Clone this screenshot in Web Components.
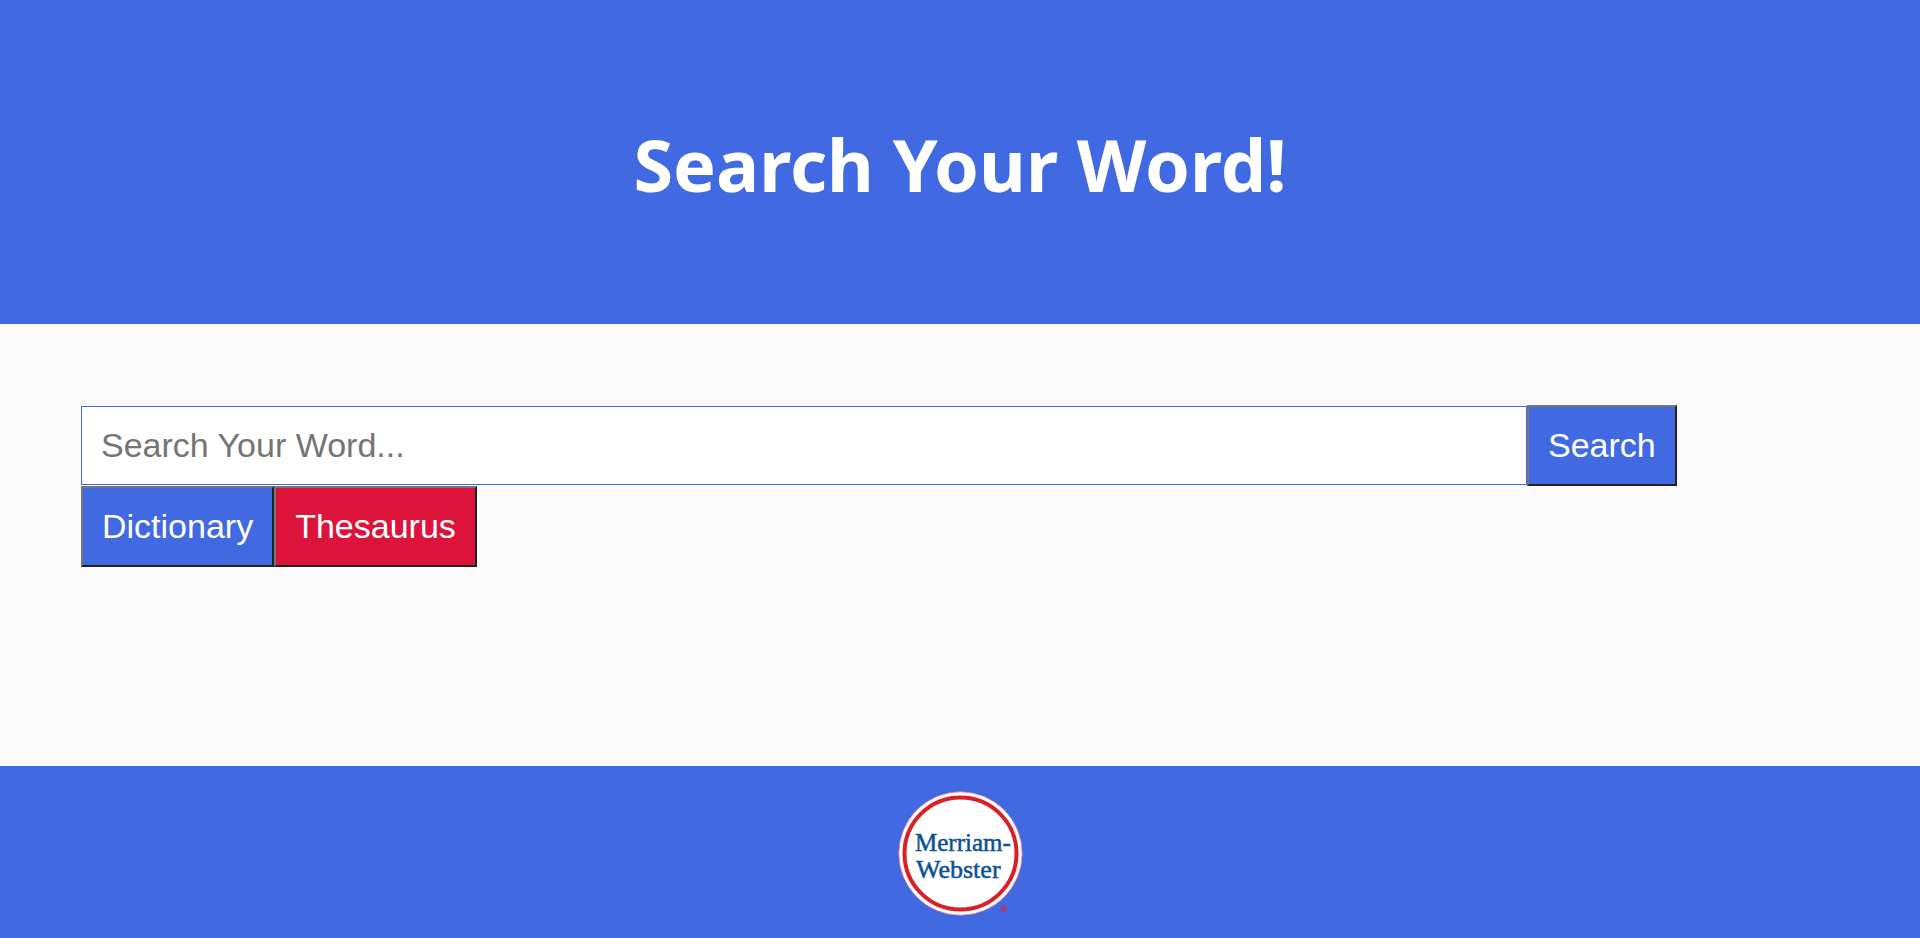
<!DOCTYPE html>
<html lang="en">
<head>
<meta charset="utf-8">
<title>Search Your Word!</title>
<style>
  body { margin: 0; background: #fafafa; }
</style>
</head>
<body>
<word-app></word-app>
<script>
class PageHeader extends HTMLElement {
  constructor() {
    super();
    this.attachShadow({ mode: 'open' }).innerHTML = `
      <style>
        :host { display: block; padding: 114px 20px 110px; background: royalblue; color: white; }
        h1 { margin: 0; text-align: center; font: bold 72px/100px "Noto Sans", "Open Sans", sans-serif; }
      </style>
      <header><h1><slot></slot></h1></header>`;
  }
}
customElements.define('page-header', PageHeader);

class WordButton extends HTMLElement {
  constructor() {
    super();
    this.attachShadow({ mode: 'open' }).innerHTML = `
      <style>
        :host { display: block; flex: none; --fill: royalblue; }
        :host([kind="thesaurus"]) { --fill: crimson; }
        button {
          display: block; margin: 0; padding: 19px; border: 2px solid;
          border-color: #767676 #212121 #212121 #767676; border-radius: 0;
          background: var(--fill); color: white;
          font: 34px/39px "Liberation Sans", Arial, sans-serif;
        }
      </style>
      <button type="button"><slot></slot></button>`;
  }
}
customElements.define('word-button', WordButton);

class WordSearch extends HTMLElement {
  constructor() {
    super();
    this.attachShadow({ mode: 'open' }).innerHTML = `
      <style>
        :host { display: block; padding: 81px 81px 199px; }
        .row { display: flex; align-items: center; }
        input {
          box-sizing: border-box; width: calc(100% - 312px); height: 79px;
          margin: 0; padding: 19px; border: 1px solid royalblue;
          border-radius: 0; background: white;
          font: 34px/39px "Liberation Sans", Arial, sans-serif;
        }
        input::placeholder { color: #757575; opacity: 1; }
      </style>
      <main>
        <div class="row">
          <input type="text" aria-label="Search Your Word" placeholder="Search Your Word...">
          <word-button>Search</word-button>
        </div>
        <div class="row">
          <word-button>Dictionary</word-button>
          <word-button kind="thesaurus">Thesaurus</word-button>
        </div>
      </main>`;
  }
}
customElements.define('word-search', WordSearch);

class PageFooter extends HTMLElement {
  constructor() {
    super();
    this.attachShadow({ mode: 'open' }).innerHTML = `
      <style>
        :host { display: block; padding: 24px 20px 22px; background: royalblue; }
        footer { display: flex; justify-content: center; }
        svg { display: block; }
        text { font-family: "Liberation Serif", "Times New Roman", serif; fill: #0b5195; stroke: #0b5195; stroke-width: .5; }
        .mark { font-size: 5px; fill: #b52f62; stroke: none; font-family: "Liberation Sans", sans-serif; }
      </style>
      <footer>
        <svg width="126" height="126" viewBox="0 0 126 126" role="img" aria-label="Merriam-Webster">
          <circle cx="63.5" cy="63.5" r="61.7" fill="white" stroke="#df7494" stroke-width=".8"/>
          <circle cx="63.5" cy="63.5" r="56" fill="white" stroke="#da1f27" stroke-width="4"/>
          <text x="18" y="61" font-size="25">Merriam-</text>
          <text x="19" y="88" font-size="26">Webster</text>
          <circle cx="106.5" cy="118.5" r="3" fill="#8b4a94" stroke="#b52f62" stroke-width=".8"/>
          <text class="mark" x="105" y="120">R</text>
        </svg>
      </footer>`;
  }
}
customElements.define('page-footer', PageFooter);

class WordApp extends HTMLElement {
  constructor() {
    super();
    this.attachShadow({ mode: 'open' }).innerHTML = `
      <style>
        :host { display: flex; flex-direction: column; min-height: 100vh; }
        page-footer { flex: 1; }
      </style>
      <page-header>Search Your Word!</page-header>
      <word-search></word-search>
      <page-footer></page-footer>`;
  }
}
customElements.define('word-app', WordApp);
</script>
</body>
</html>
